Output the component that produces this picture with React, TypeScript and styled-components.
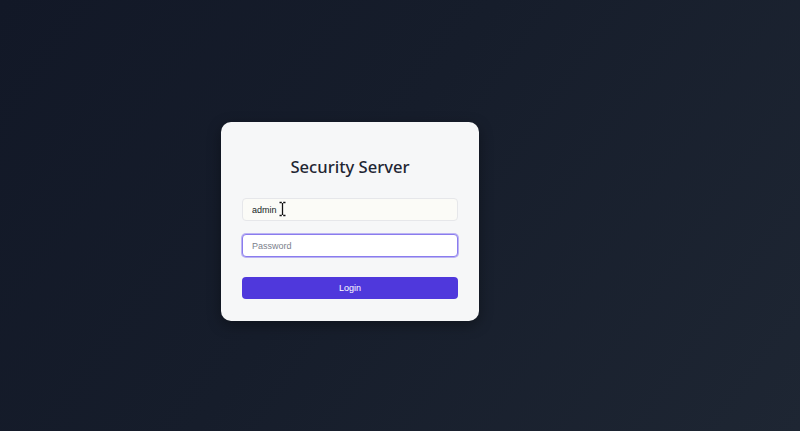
import React from "react";
import styled, { createGlobalStyle } from "styled-components";

const Global = createGlobalStyle`
  html, body { margin: 0; padding: 0; height: 100%; }
  body { background: #141b29; }
  * { box-sizing: border-box; }
`;

const Page = styled.div`
  width: 100vw;
  height: 100vh;
  overflow: hidden;
  background: linear-gradient(125deg, #121827 0%, #161d2b 45%, #1e2633 100%);
  display: flex;
  align-items: center;
  justify-content: center;
  padding: 12px 100px 0 0;
`;

const Card = styled.form`
  width: 258px;
  height: 199px;
  background: #f6f7f8;
  border-radius: 10px;
  padding: 31px 21px 22px;
  display: flex;
  flex-direction: column;
  box-shadow: 0 4px 14px rgba(0, 0, 0, 0.35);
`;

const Title = styled.h1`
  margin: 0 0 17px;
  font-family: "Noto Sans", "Open Sans", sans-serif;
  font-weight: 500;
  font-size: 16.6px;
  line-height: 28px;
  color: #1f2633;
  text-align: center;
`;

const Field = styled.div<{ $gap: number }>`
  position: relative;
  margin-bottom: ${(p) => p.$gap}px;
`;

const Input = styled.input<{ $focused?: boolean; $filled?: boolean }>`
  display: block;
  width: 100%;
  height: 23px;
  padding: 0 9px;
  border-radius: 4px;
  font-family: "Liberation Sans", Arial, sans-serif;
  font-size: 9px;
  color: #151b26;
  outline: none;
  background: ${(p) => (p.$filled ? "#fbfbf7" : "#ffffff")};
  border: 1px solid ${(p) => (p.$focused ? "#8a7cee" : "#e6e7ea")};
  box-shadow: ${(p) => (p.$focused ? "0 0 0 1px rgba(139, 124, 238, 0.55)" : "none")};
  &::placeholder { color: #7b818c; }
`;

const Cursor = styled.svg`
  position: absolute;
  left: 36px;
  top: 3px;
  width: 9px;
  height: 16px;
  pointer-events: none;
`;

const Button = styled.button`
  display: block;
  width: 100%;
  height: 22px;
  border: none;
  border-radius: 4px;
  background: #4f38dc;
  color: #ffffff;
  font-family: "Liberation Sans", Arial, sans-serif;
  font-size: 9px;
  cursor: pointer;
`;

const beam = "M1.5 1.5 H3.8 M5.2 1.5 H7.5 M4.5 2 V14 M1.5 14.5 H3.8 M5.2 14.5 H7.5";

export default function App() {
  return (
    <>
      <Global />
      <Page>
        <Card onSubmit={(e) => e.preventDefault()}>
          <Title>Security Server</Title>
          <Field $gap={13}>
            <Input $filled defaultValue="admin" />
            <Cursor viewBox="0 0 9 16">
              <path d={beam} stroke="#fff" strokeWidth="2.6" fill="none" strokeLinecap="square" />
              <path d={beam} stroke="#111" strokeWidth="1.3" fill="none" />
            </Cursor>
          </Field>
          <Field $gap={20}>
            <Input $focused type="password" placeholder="Password" />
          </Field>
          <Button type="submit">Login</Button>
        </Card>
      </Page>
    </>
  );
}
